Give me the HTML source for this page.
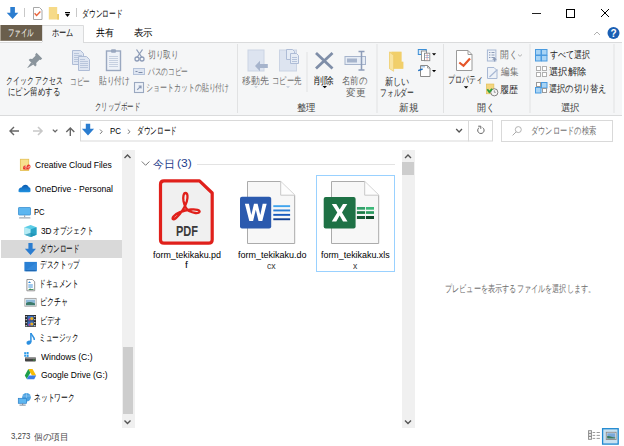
<!DOCTYPE html>
<html><head><meta charset="utf-8">
<style>
html,body{margin:0;padding:0;}
body{width:624px;height:446px;overflow:hidden;position:relative;background:#fff;font-family:'Liberation Sans',sans-serif;}
.a{position:absolute;}
.t{position:absolute;white-space:nowrap;line-height:12px;transform-origin:0 0;font-family:'Liberation Sans',sans-serif;}
svg{position:absolute;overflow:visible;}
</style></head><body>

<!-- ===== title bar ===== -->
<svg style="left:0;top:0" width="624" height="42" viewBox="0 0 624 42">
  <!-- download arrow -->
  <path d="M10.3 7h4.6v5.8h3.4L12.6 19 6.7 12.8h3.6z" fill="#2b7dd0"/>
  <rect x="24" y="8" width="1" height="9" fill="#c8c8c8"/>
  <!-- properties doc -->
  <path d="M33.5 7.5h6l2.5 2.5v9.5h-8.5z" fill="#fff" stroke="#a8a8a8" stroke-width="1"/>
  <path d="M34.6 13.2l2 2.2 3.8-3.8" fill="none" stroke="#e8643c" stroke-width="1.4"/>
  <!-- folder -->
  <path d="M48.8 7h8.4v7h1.8v5.6H48.8z" fill="#f6da88"/>
  <path d="M57.2 14h1.8v5.6h-1.8z" fill="#eccb6a"/>
  <!-- dropdown -->
  <rect x="65" y="12" width="5" height="1" fill="#000"/>
  <path d="M65 13.8h5l-2.5 3.1z" fill="#000"/>
  <rect x="76" y="8" width="1" height="9" fill="#c8c8c8"/>
  <!-- window controls -->
  <rect x="532" y="13" width="9" height="1" fill="#222"/>
  <rect x="566.5" y="9.5" width="8" height="8" fill="none" stroke="#000" stroke-width="1"/>
  <path d="M601 9l8 8M609 9l-8 8" stroke="#000" stroke-width="1"/>
  <!-- file tab -->
  <rect x="0" y="25" width="1" height="16" fill="#a89e8e"/><rect x="1" y="25" width="42" height="15.8" fill="#6a5e4c"/>
  <!-- home tab -->
  <path d="M42.5 42.5V25.5h41v17" fill="#f5f6f7" stroke="#dadbdc" stroke-width="1"/>
  <!-- caret + help -->
  <path d="M594 35l3-3 3 3" fill="none" stroke="#b0b0b0" stroke-width="1"/>
  <circle cx="613.5" cy="33" r="6" fill="#1a5fb4"/>
  <text x="613.5" y="37" font-size="10" font-weight="bold" fill="#fff" text-anchor="middle" font-family="Liberation Sans">?</text>
</svg>

<!-- ===== ribbon ===== -->
<div class="a" style="left:0;top:42px;width:622px;height:73px;background:#f5f6f7;border-top:1px solid #dadbdc;border-bottom:1px solid #dadbdc;box-sizing:border-box;height:74px"></div>
<div class="a" style="left:42px;top:42px;width:41px;height:2px;background:#f5f6f7"></div>
<svg style="left:0;top:0" width="624" height="120" viewBox="0 0 624 120">
  <!-- separators -->
  <rect x="237" y="44" width="1" height="69" fill="#e1e2e3"/>
  <rect x="376.5" y="44" width="1" height="69" fill="#e1e2e3"/>
  <rect x="443" y="44" width="1" height="69" fill="#e1e2e3"/>
  <rect x="529.5" y="44" width="1" height="69" fill="#e1e2e3"/>
  <rect x="613.5" y="44" width="1" height="69" fill="#e1e2e3"/>
  <rect x="306.5" y="52" width="1" height="40" fill="#e1e2e3"/>

  <!-- pin -->
  <g fill="#8a949c">
    <path d="M36.5 52.8l5.7 5.7-1.5 1.5-1.2-.3-3.3 3.3.3 2.2-1.3 1.3-6.5-6.5 1.3-1.3 2.2.3 3.3-3.3-.3-1.2z"/>
    <path d="M31.2 62.2l2.2 2.2-5.8 3.6-.3-.3z"/>
  </g>
  <!-- copy -->
  <g stroke="#aebcd6" stroke-width="1" fill="#dfe6f2">
    <path d="M72.5 50.5h8l3 3v11h-11z"/>
    <path d="M78.5 56.5h8l3 3v11h-11z"/>
  </g>
  <g stroke="#b9c6dc" stroke-width="1">
    <path d="M74 53.5h5M74 55.5h8M74 57.5h4M74 59.5h4M74 61.5h4"/>
    <path d="M80 59.5h5M80 61.5h8M80 63.5h8M80 65.5h8M80 67.5h8"/>
  </g>
  <!-- paste clipboard -->
  <rect x="106.5" y="51" width="14" height="19.5" fill="#eef2f8" stroke="#9aa8c0" stroke-width="1.4"/>
  <rect x="111" y="49.3" width="5" height="3.5" rx="1" fill="#9aa8c0"/>
  <g stroke="#c6d0e0" stroke-width="1"><path d="M109 56.5h9M109 58.5h9M109 60.5h9M109 62.5h9M109 64.5h9M109 66.5h9"/></g>
  <!-- scissors -->
  <g fill="none" stroke="#8d9cb8" stroke-width="1.3">
    <path d="M136.5 49.5l5.5 8M142.5 49.5l-5.5 8"/>
    <circle cx="137" cy="59" r="2"/><circle cx="142" cy="59" r="2"/>
  </g>
  <!-- path copy -->
  <rect x="133.5" y="68.5" width="11" height="6" fill="#dfe6f2" stroke="#b4c2da" stroke-width="1"/>
  <path d="M135.5 71.5h2M138.5 72.5h4" stroke="#7d8ca8" stroke-width="1"/>
  <!-- shortcut paste -->
  <rect x="134.5" y="82.5" width="9" height="10" fill="#eef2f8" stroke="#9aa8c0" stroke-width="1.1"/>
  <path d="M137.2 89.8l3.8-3.8M138.6 86h2.4v2.4" fill="none" stroke="#8d9cb8" stroke-width="1.2"/>

  <!-- move to -->
  <rect x="248" y="50" width="16" height="21" fill="#dde4f0" stroke="#cbd4e4" stroke-width="1"/>
  <path d="M255 66l5-5.3v3.3h7.8v4h-7.8v3.3z" fill="#a6b4cc"/>
  <!-- copy to -->
  <rect x="279.5" y="50" width="17" height="21" fill="#dde4f0" stroke="#cbd4e4" stroke-width="1"/>
  <g stroke="#aebcd6" stroke-width="1" fill="#e6ecf5">
    <path d="M286.5 49.5h6l2 2v8h-8z"/>
    <path d="M290.5 53.5h6l2 2v8h-8z"/>
  </g>
  <path d="M292 57.5h5M292 59.5h5M292 61.5h5" stroke="#b4c2da" stroke-width="1"/>
  <path d="M254 86.5h4l-2 1.3z M286 86.5h4l-2 1.3z" fill="#a6b4cc"/>
  <!-- delete X -->
  <path d="M316 53l16.5 15.5M332.5 53L316 68.5" stroke="#7f8ea8" stroke-width="2.8"/>
  <path d="M322.5 86h4.5l-2.25 2.2z" fill="#000"/>
  <!-- rename -->
  <rect x="345" y="56.5" width="20.5" height="8" fill="#e6ecf5" stroke="#a6b4cc" stroke-width="1"/>
  <rect x="347" y="58.5" width="10" height="4" fill="#a6b4cc"/>
  <path d="M358.5 51.5h6M361.5 51.5v18.5M358.5 70h6" fill="none" stroke="#8d9cb8" stroke-width="1.5"/>

  <!-- new folder -->
  <path d="M389.5 51.8h12v9.9h1.8v7h-13.8z" fill="#f4d67c"/>
  <path d="M393.6 55.5v13.2h9.7v-7h-1.8v-9.9h-10z" fill="#efc95f" opacity="0.6"/>
  <path d="M389.5 52l4.1 3.3v16l-4.1-2.6z" fill="#f9e4a0" stroke="#ecc862" stroke-width="0.6"/>
  <!-- new item -->
  <rect x="418.3" y="49.5" width="8" height="5" fill="#d6e8f8" stroke="#3d8fd6" stroke-width="1"/>
  <rect x="421.5" y="51" width="5" height="9.5" fill="#fff" stroke="#8a8a8a" stroke-width="0.9"/>
  <rect x="424.5" y="53.2" width="5.3" height="7.5" fill="#fff" stroke="#8a8a8a" stroke-width="0.9"/>
  <path d="M425.3 55.5h3.8M425.3 57.5h3.8" stroke="#7aaee0" stroke-width="0.7"/>
  <path d="M427.1 53.8v6.5" stroke="#e07070" stroke-width="0.6"/>
  <path d="M432 53.3h4.1l-2.05 2.3z" fill="#000"/>
  <!-- easy access -->
  <path d="M420.5 65.5h7l2.5 2.5v8.5h-9.5z" fill="#fff" stroke="#8a8a8a" stroke-width="1"/>
  <path d="M427.5 65.5v2.5h2.5" fill="none" stroke="#8a8a8a" stroke-width="0.8"/>
  <path d="M421 66.8h4" stroke="#6aa0d8" stroke-width="0.8"/>
  <path d="M418.2 70.6l4.4-1.6" stroke="#1f6fc0" stroke-width="1.5"/>
  <path d="M432 70h4.1l-2.05 2.3z" fill="#000"/>

  <!-- properties -->
  <path d="M456.5 50.5h11.5l4 4v16h-15.5z" fill="#fff" stroke="#9a9a9a" stroke-width="1"/>
  <path d="M468 50.5v4h4" fill="none" stroke="#9a9a9a" stroke-width="1"/>
  <path d="M459.3 62.5l4.2 3.3 6.5-7.2" fill="none" stroke="#e5562a" stroke-width="2.2"/>
  <path d="M463.8 86.2h4.5l-2.25 2.2z" fill="#000"/>
  <!-- open -->
  <rect x="487.4" y="50" width="8.5" height="11" fill="#eef2f8" stroke="#a8b8d4" stroke-width="1"/>
  <path d="M489 52.5h1.4M489 55h1.4M489 57.5h1.4M491.5 52.5h3M491.5 55h3M491.5 57.5h3" stroke="#8d9cb8" stroke-width="1"/>
  <path d="M494.5 61.5v-3.5M492.8 59.8l1.7-1.9 1.7 1.9" fill="none" stroke="#8d9cb8" stroke-width="1.1"/>
  <path d="M518 54.5l2 1.8 2-1.8" fill="none" stroke="#aaa" stroke-width="0.9"/>
  <!-- edit -->
  <path d="M487.5 67.5h6.5l3 3v8h-9.5z" fill="#eef2f8" stroke="#a8b8d4" stroke-width="1"/>
  <path d="M489.5 77l8-7.5" stroke="#a8b8d4" stroke-width="1.2"/>
  <!-- history -->
  <rect x="486.3" y="84" width="7.6" height="9.8" fill="#f3d57e" stroke="#e0bc50" stroke-width="0.6"/>
  <circle cx="494.3" cy="92.3" r="3.6" fill="#f4f4f4" stroke="#777" stroke-width="0.9"/>
  <path d="M494.3 90.3v2h1.5" fill="none" stroke="#777" stroke-width="0.7"/>
  <path d="M487.3 89.3l2 2.8 2.8-3.3" fill="none" stroke="#2f9e3f" stroke-width="1.8"/>

  <!-- select all -->
  <g fill="#a8d4f5" stroke="#4a9be0" stroke-width="1">
    <rect x="535.5" y="49.5" width="5.5" height="5.5"/><rect x="541.5" y="49.5" width="5.5" height="5.5"/>
    <rect x="535.5" y="55.5" width="5.5" height="5.5"/><rect x="541.5" y="55.5" width="5.5" height="5.5"/>
  </g>
  <!-- select none -->
  <g fill="#fff" stroke="#b0b0b0" stroke-width="1">
    <rect x="536.5" y="66.5" width="4" height="4"/><rect x="542.5" y="66.5" width="4" height="4"/>
    <rect x="536.5" y="72.5" width="4" height="4"/><rect x="542.5" y="72.5" width="4" height="4"/>
  </g>
  <!-- invert -->
  <g stroke-width="1">
    <rect x="536.5" y="82.5" width="4" height="4" fill="#fff" stroke="#9a9a9a"/>
    <rect x="541.5" y="82.5" width="5.5" height="5.5" fill="#a8d4f5" stroke="#4a9be0"/>
    <rect x="535.5" y="87.5" width="5.5" height="5.5" fill="#a8d4f5" stroke="#4a9be0"/>
    <rect x="542.5" y="88.5" width="4" height="4" fill="#fff" stroke="#9a9a9a"/>
  </g>
</svg>

<!-- ===== address bar ===== -->
<svg style="left:0;top:115px" width="624" height="32" viewBox="0 115 624 32">
  <path d="M10 131h9M14 127l-4 4 4 4" fill="none" stroke="#666" stroke-width="1.4"/>
  <path d="M33 131h9M38 127l4 4-4 4" fill="none" stroke="#c8c8c8" stroke-width="1.6"/>
  <path d="M52.8 129.6l2.3 2.2 2.3-2.2" fill="none" stroke="#666" stroke-width="1.2"/>
  <path d="M70.3 136V128M66.3 132l4-4 4 4" fill="none" stroke="#666" stroke-width="1.4"/>
  <rect x="80.5" y="120.5" width="388" height="20.5" fill="#fff" stroke="#d9d9d9" stroke-width="1"/>
  <rect x="468.5" y="120.5" width="24" height="20.5" fill="#fff" stroke="#d9d9d9" stroke-width="1"/>
  <path d="M83 124h0" stroke="none"/>
  <path d="M85.8 123.8h4.4v5h3.9L88 135.6 81.9 128.8h3.9z" fill="#2b7dd0"/>
  <path d="M100 129.5l2.2 2.2-2.2 2.2M127.8 129.5l2.2 2.2-2.2 2.2" fill="none" stroke="#777" stroke-width="1"/>
  <path d="M456.2 129l2.9 3 2.9-3" fill="none" stroke="#555" stroke-width="1.3"/>
  <path d="M479.2 127.6a3.2 3.2 0 1 0 3.4 0" fill="none" stroke="#666" stroke-width="1"/><path d="M478.2 126.2h2.6v2.6" fill="none" stroke="#666" stroke-width="1"/>
  <rect x="501.5" y="120.5" width="111" height="21" fill="#fff" stroke="#d9d9d9" stroke-width="1"/>
  <circle cx="518.3" cy="129.6" r="3" fill="none" stroke="#aaa" stroke-width="0.9"/>
  <path d="M516.2 131.8l-3.6 3.6" stroke="#aaa" stroke-width="1"/>
</svg>

<!-- ===== nav pane ===== -->
<div class="a" style="left:1px;top:240px;width:120.5px;height:17.6px;background:#d9d9d9"></div>
<div class="a" style="left:122px;top:150px;width:12.5px;height:278px;background:#f0f0f0"></div>
<div class="a" style="left:122.5px;top:347px;width:10.5px;height:67px;background:#cdcdcd"></div>
<svg style="left:0;top:146px" width="140" height="282" viewBox="0 146 140 282">
  <path d="M124.5 158l3-3 3 3" fill="none" stroke="#555" stroke-width="1.4"/>
  <path d="M124.5 420.5l3 3 3-3" fill="none" stroke="#555" stroke-width="1.4"/>
  <!-- CC folder -->
  <rect x="20.4" y="159.3" width="8.3" height="11.2" fill="#f7df8e" stroke="#e6c25a" stroke-width="0.9"/>
  <path d="M23.2 167.3a1.9 1.9 0 1 1 3.8 0a1.9 1.9 0 1 1 3.4 0a2.3 2.3 0 0 1-2.3 2.3h-4.6a2.3 2.3 0 0 1-.3-2.3z" fill="#e8332a"/>
  <path d="M25 167.2a1 1 0 1 1 0 .1M28.5 167.2a1 1 0 1 1 0 .1" fill="none" stroke="#fbd0c0" stroke-width="0.7"/>
  <!-- OneDrive cloud -->
  <defs><linearGradient id="od" x1="0" y1="0" x2="0" y2="1"><stop offset="0" stop-color="#0a5ab0"/><stop offset="1" stop-color="#2191e0"/></linearGradient></defs>
  <path d="M18.5 191C18.5 189 19.5 187.8 21.5 187.6C22.3 185.7 23.8 184.7 25.5 184.7C27.2 184.7 28.3 185.7 28.8 187.3C29.8 187.3 30.5 188.2 30.5 189.5V191C30.5 191.8 30 192.2 29.3 192.2H19.7C19 192.2 18.5 191.8 18.5 191Z" fill="url(#od)"/>
  <!-- PC monitor -->
  <rect x="18.5" y="207.5" width="12" height="7.5" rx="0.6" fill="#5db6f0" stroke="#3a8fd0" stroke-width="0.8"/>
  <rect x="24" y="215.2" width="1.2" height="2" fill="#a0aab5"/>
  <rect x="19" y="217.2" width="11.5" height="1.4" rx="0.6" fill="#a0aab5"/>
  <!-- 3D cube -->
  <path d="M24.5 227.2l6.2-2.2 5.8 2.2v7.6l-5.8 2.2-6.2-2.2z" fill="#5ccde6"/>
  <path d="M24.5 227.2l6.2 2.1v7.7l-6.2-2.2z" fill="#b5ecf5"/>
  <path d="M30.7 229.3l5.8-2.1v7.6l-5.8 2.2z" fill="#2aa3c6"/>
  <path d="M24.5 234.8l6.2-2 5.8 2-5.8 2.2z" fill="#1f8eb0" opacity="0.7"/>
  <!-- download arrow -->
  <path d="M28.4 242.9h4.2v5.8h3.4l-5.5 6.2-5.6-6.2h3.5z" fill="#2b7dd0"/>
  <!-- desktop -->
  <rect x="24.4" y="261.9" width="12.5" height="9.3" fill="#2a80d4"/>
  <path d="M24.4 271.2l12.5-9.3v9.3z" fill="#3d8fe0" opacity="0.5"/>
  <rect x="25.5" y="270.2" width="10.3" height="1" fill="#1a5fa8"/>
  <!-- documents -->
  <path d="M26.9 279.5h5.5l2.3 2.3v9h-7.8z" fill="#fff" stroke="#888" stroke-width="0.9"/>
  <path d="M29.5 281.2l1.5 1.8h-3z" fill="#2b88d8"/>
  <path d="M28.3 285h4.5M28.3 287h4.5" stroke="#2b88d8" stroke-width="0.9"/>
  <path d="M28 290l2-1.5 2 .8 1.5-.5v1.2z" fill="#3d8a5a"/>
  <!-- pictures -->
  <rect x="24.9" y="298.4" width="11.2" height="7.8" fill="#fff" stroke="#a0a0a0" stroke-width="0.9"/>
  <rect x="26" y="299.6" width="9" height="5.6" fill="#8cb8d8"/>
  <path d="M26 303.2c2-1.5 4-1.5 9 .2v1.8h-9z" fill="#3c7a6a"/>
  <!-- videos -->
  <rect x="25" y="315" width="11" height="11.8" fill="#2a2a2a"/>
  <g fill="#ddd"><rect x="25.6" y="316" width="1.2" height="1.2"/><rect x="25.6" y="319" width="1.2" height="1.2"/><rect x="25.6" y="322" width="1.2" height="1.2"/><rect x="25.6" y="325" width="1.2" height="1.2"/><rect x="34.2" y="316" width="1.2" height="1.2"/><rect x="34.2" y="319" width="1.2" height="1.2"/><rect x="34.2" y="322" width="1.2" height="1.2"/><rect x="34.2" y="325" width="1.2" height="1.2"/></g>
  <rect x="27.5" y="315.8" width="6.2" height="4.8" fill="#3a6ec0"/>
  <rect x="27.5" y="321.2" width="6.2" height="4.8" fill="#3a6ec0"/>
  <circle cx="31.8" cy="318.6" r="1.6" fill="#e8b020"/><circle cx="31.8" cy="324" r="1.6" fill="#e8b020"/>
  <circle cx="29.5" cy="319.5" r="1" fill="#d03a80"/><circle cx="29.5" cy="324.8" r="1" fill="#d03a80"/>
  <!-- music -->
  <path d="M30.9 333v9.2" stroke="#2b8fe0" stroke-width="1.5"/>
  <ellipse cx="28.9" cy="342.6" rx="2.5" ry="2" transform="rotate(-20 28.9 342.6)" fill="#2b8fe0"/>
  <path d="M31 333.2c.6 2.6 3.4 3.3 3.3 6.8" fill="none" stroke="#2b8fe0" stroke-width="1.4"/>
  <!-- windows drive -->
  <g fill="#2b9ae8"><rect x="24.2" y="352.2" width="1.9" height="2"/><rect x="26.6" y="352" width="2" height="2.2"/><rect x="24.2" y="354.7" width="1.9" height="2"/><rect x="26.6" y="354.7" width="2" height="2.2"/></g>
  <rect x="25" y="357.3" width="10.8" height="4.2" rx="0.8" fill="#444"/>
  <rect x="25.3" y="357.3" width="10.2" height="1.3" fill="#aaa"/>
  <rect x="33.3" y="359.6" width="1.3" height="0.9" fill="#4c4"/>
  <!-- google drive -->
  <path d="M28.3 369h4.2l3.7 6.5h-4.2z" fill="#f8bc05"/>
  <path d="M28.3 369l2.1 3.7-3.6 6.3-2-3.5z" fill="#1e9f4a"/>
  <path d="M26.8 379.2l2-3.6h7.4l-2 3.6z" fill="#3a7de8"/>
  <!-- network -->
  <circle cx="26.5" cy="397.3" r="4.3" fill="#4da2e0"/>
  <path d="M23 396h7M26.5 393v8.5" stroke="#9fd0f5" stroke-width="0.6"/>
  <rect x="18.3" y="398.3" width="8.3" height="5" fill="#5db6f0" stroke="#2a7fc8" stroke-width="0.7"/>
  <rect x="22" y="403.5" width="1.2" height="1.3" fill="#7a8a9a"/>
  <rect x="19.5" y="404.6" width="6.2" height="1" fill="#7a8a9a"/>
</svg>

<!-- ===== content ===== -->
<div class="a" style="left:197px;top:164px;width:198px;height:1px;background:#e3e3e3"></div>
<div class="a" style="left:401.5px;top:150px;width:13.5px;height:278px;background:#f0f0f0"></div>
<div class="a" style="left:402px;top:162px;width:11.5px;height:13px;background:#cdcdcd"></div>
<div class="a" style="left:316px;top:175px;width:79px;height:97px;border:1px solid #99d1ff;box-sizing:border-box"></div>
<svg style="left:0;top:146px" width="624" height="282" viewBox="0 146 624 282">
  <path d="M405 158l3-3 3 3" fill="none" stroke="#555" stroke-width="1.4"/>
  <path d="M405 420.5l3 3 3-3" fill="none" stroke="#555" stroke-width="1.4"/>
  <path d="M141.8 161.5l3.8 3.8 3.8-3.8" fill="none" stroke="#777" stroke-width="1"/>
  <!-- PDF -->
  <path d="M164 180.8h35.5l12.7 12.2v46.7q0 3.5-3.5 3.5h-44.7q-3.5 0-3.5-3.5v-55.4q0-3.5 3.5-3.5z" fill="#f0f0f0" stroke="#e0201b" stroke-width="3.2" stroke-linejoin="round"/>
  <path d="M185.5 193C187.8 193 188 197 186.8 201.5C185.5 206 181 214 176 218C173 220.5 171.5 219 173.5 216.5C176 213.5 183 210.5 191 209.5C196 209 200.5 210 199.5 212C198.5 214 193 213 189 211C186.5 209.5 184.5 206 183.5 201C182.8 197 183.5 193 185.5 193Z" fill="none" stroke="#e0201b" stroke-width="2.3" stroke-linejoin="round"/>
  <text x="176" y="235.6" font-family="Liberation Sans" font-weight="bold" font-size="13.8" fill="#3a3a3a" textLength="22" lengthAdjust="spacingAndGlyphs">PDF</text>
  <!-- Word -->
  <path d="M247.5 181.5h33.2l14 13.7v48.3h-47.2z" fill="#f7f7f7" stroke="#ababab" stroke-width="1"/>
  <path d="M280.7 181.5v13.7h14" fill="#fdfdfd" stroke="#c8c8c8" stroke-width="1"/>
  <rect x="240" y="196.8" width="31.2" height="31.6" rx="2" fill="#2b5aae"/>
  <path d="M244.9 203.7h4l2.4 11.3 2.7-11.3h3.6l2.7 11.3 2.4-11.3h4l-4.4 17.3h-3.8l-2.7-11.2-2.7 11.2h-3.8z" fill="#fff"/>
  <rect x="273.3" y="205.2" width="16.8" height="1.9" fill="#41a5ee"/>
  <rect x="273.3" y="209.5" width="16.8" height="1.9" fill="#2b7cd3"/>
  <rect x="273.3" y="213.9" width="16.8" height="1.9" fill="#185abd"/>
  <rect x="273.3" y="218.3" width="16.8" height="1.9" fill="#103f91"/>
  <!-- Excel -->
  <path d="M331.5 181.5h33.2l14 13.7v48.3h-47.2z" fill="#f7f7f7" stroke="#ababab" stroke-width="1"/>
  <path d="M364.7 181.5v13.7h14" fill="#fdfdfd" stroke="#c8c8c8" stroke-width="1"/>
  <rect x="323.7" y="196.9" width="31.9" height="31.7" rx="2" fill="#1e7145"/>
  <path d="M331.8 203.9h4.5l3.35 5.7 3.35-5.7h4.3l-5.3 8.6 5.5 8.9h-4.5l-3.35-5.9-3.35 5.9h-4.5l5.5-8.9z" fill="#fff"/>
  <rect x="356.9" y="207" width="8.1" height="2.7" fill="#33a06a"/>
  <rect x="365.9" y="207" width="8.1" height="2.7" fill="#3cb878"/>
  <rect x="356.9" y="211.2" width="8.1" height="2.7" fill="#1a7a45"/>
  <rect x="365.9" y="211.2" width="8.1" height="2.7" fill="#2a9a5f"/>
  <rect x="356.9" y="216" width="8.1" height="3" fill="#185c37"/>
  <rect x="365.9" y="216" width="8.1" height="3" fill="#0f4a2a"/>
</svg>

<!-- ===== status bar ===== -->
<svg style="left:0;top:425px" width="624" height="21" viewBox="0 425 624 21">
  <g fill="#fff" stroke="#8a8a8a" stroke-width="1">
    <rect x="588.6" y="430.7" width="2.8" height="2.6"/>
    <rect x="588.6" y="433.6" width="2.8" height="2.6"/>
    <rect x="588.6" y="436.5" width="2.8" height="2.8"/>
  </g>
  <path d="M592.6 432.5h2.6M596.6 432.5h3.3M592.6 435.4h2.6M596.6 435.4h3.3M592.6 438.4h2.6M596.6 438.4h3.3" stroke="#9a9a9a" stroke-width="1"/>
  <rect x="602.6" y="428.7" width="15.6" height="15.4" fill="#c8e1f0" stroke="#1e88d0" stroke-width="1.3"/>
  <rect x="606.3" y="432.3" width="9.8" height="7.2" fill="#fff" stroke="#8a8a8a" stroke-width="0.9"/>
  <rect x="607.2" y="433.2" width="8" height="5.4" fill="#7aa8d8"/>
  <path d="M607.2 436c2.5-.5 4.5 1 8 1.6v1h-8z" fill="#3d7a5a"/>
</svg>

<div class="t" style="left:81.72px;top:5.80px;color:#000;transform:scaleX(0.6776)"><span style="font-size:10px">ダウンロード</span></div>
<div class="t" style="left:8.15px;top:24.70px;color:#fff;transform:scaleX(0.6462)"><span style="font-size:10px">ファイル</span></div>
<div class="t" style="left:52.28px;top:25.00px;color:#000;transform:scaleX(0.7214)"><span style="font-size:10px">ホーム</span></div>
<div class="t" style="left:96.00px;top:25.00px;color:#000;transform:scaleX(0.8947)"><span style="font-size:10px">共有</span></div>
<div class="t" style="left:134.05px;top:25.00px;color:#000;transform:scaleX(0.9474)"><span style="font-size:10px">表示</span></div>
<div class="t" style="left:6.01px;top:73.00px;color:#222;transform:scaleX(0.6864)"><span style="font-size:10px">クイック</span><span style="font-size:9.5px"> </span><span style="font-size:10px">アクセス</span></div>
<div class="t" style="left:8.26px;top:84.40px;color:#222;transform:scaleX(0.7426)"><span style="font-size:10px">にピン留めする</span></div>
<div class="t" style="left:69.67px;top:74.00px;color:#707070;transform:scaleX(0.6667)"><span style="font-size:10px">コピー</span></div>
<div class="t" style="left:98.50px;top:73.40px;color:#707070;transform:scaleX(0.7744)"><span style="font-size:10px">貼り付け</span></div>
<div class="t" style="left:148.20px;top:47.40px;color:#707070;transform:scaleX(0.7711)"><span style="font-size:10px">切り取り</span></div>
<div class="t" style="left:147.70px;top:63.90px;color:#707070;transform:scaleX(0.6695)"><span style="font-size:10px">パスのコピー</span></div>
<div class="t" style="left:146.31px;top:79.90px;color:#707070;transform:scaleX(0.6949)"><span style="font-size:10px">ショートカットの貼り付け</span></div>
<div class="t" style="left:95.35px;top:99.00px;color:#3c3c3c;transform:scaleX(0.6471)"><span style="font-size:10px">クリップボード</span></div>
<div class="t" style="left:242.00px;top:73.40px;color:#707070;transform:scaleX(0.8900)"><span style="font-size:10px">移動先</span></div>
<div class="t" style="left:271.83px;top:73.00px;color:#707070;transform:scaleX(0.7342)"><span style="font-size:10px">コピー先</span></div>
<div class="t" style="left:314.00px;top:73.00px;color:#222;transform:scaleX(0.9789)"><span style="font-size:10px">削除</span></div>
<div class="t" style="left:342.16px;top:73.00px;color:#666;transform:scaleX(0.8448)"><span style="font-size:10px">名前の</span></div>
<div class="t" style="left:345.53px;top:85.00px;color:#666;transform:scaleX(0.9722)"><span style="font-size:10px">変更</span></div>
<div class="t" style="left:296.77px;top:100.00px;color:#3c3c3c;transform:scaleX(0.9333)"><span style="font-size:10px">整理</span></div>
<div class="t" style="left:384.78px;top:74.00px;color:#222;transform:scaleX(0.8179)"><span style="font-size:10px">新しい</span></div>
<div class="t" style="left:380.12px;top:84.70px;color:#222;transform:scaleX(0.6771)"><span style="font-size:10px">フォルダー</span></div>
<div class="t" style="left:399.03px;top:100.00px;color:#3c3c3c;transform:scaleX(0.9667)"><span style="font-size:10px">新規</span></div>
<div class="t" style="left:447.50px;top:72.40px;color:#222;transform:scaleX(0.6957)"><span style="font-size:10px">プロパティ</span></div>
<div class="t" style="left:499.92px;top:47.00px;color:#707070;transform:scaleX(0.8812)"><span style="font-size:10px">開く</span></div>
<div class="t" style="left:500.80px;top:64.00px;color:#707070;transform:scaleX(0.8526)"><span style="font-size:10px">編集</span></div>
<div class="t" style="left:499.90px;top:81.50px;color:#333;transform:scaleX(0.9000)"><span style="font-size:10px">履歴</span></div>
<div class="t" style="left:477.30px;top:100.00px;color:#3c3c3c;transform:scaleX(0.9000)"><span style="font-size:10px">開く</span></div>
<div class="t" style="left:549.90px;top:47.10px;color:#222;transform:scaleX(0.8020)"><span style="font-size:10px">すべて選択</span></div>
<div class="t" style="left:549.07px;top:64.20px;color:#222;transform:scaleX(0.9342)"><span style="font-size:10px">選択解除</span></div>
<div class="t" style="left:549.18px;top:80.50px;color:#222;transform:scaleX(0.8235)"><span style="font-size:10px">選択の切り替え</span></div>
<div class="t" style="left:561.06px;top:100.00px;color:#3c3c3c;transform:scaleX(0.9444)"><span style="font-size:10px">選択</span></div>
<div class="t" style="left:109.97px;top:122.50px;color:#000;transform:scaleX(0.8333)"><span style="font-size:9.5px">PC</span></div>
<div class="t" style="left:137.03px;top:123.00px;color:#000;transform:scaleX(0.6690)"><span style="font-size:10px">ダウンロード</span></div>
<div class="t" style="left:531.28px;top:123.00px;color:#6d6d6d;transform:scaleX(0.7225)"><span style="font-size:10px">ダウンロードの検索</span></div>
<div class="t" style="left:34.80px;top:157.10px;color:#000;transform:scaleX(0.8976)"><span style="font-size:9.5px">Creative Cloud Files</span></div>
<div class="t" style="left:34.50px;top:181.20px;color:#000;transform:scaleX(0.9058)"><span style="font-size:9.5px">OneDrive - Personal</span></div>
<div class="t" style="left:34.29px;top:203.70px;color:#000;transform:scaleX(0.8083)"><span style="font-size:9.5px">PC</span></div>
<div class="t" style="left:40.50px;top:222.60px;color:#000;transform:scaleX(0.9182)"><span style="font-size:9px">3D</span></div>
<div class="t" style="left:52.93px;top:223.20px;color:#000;transform:scaleX(0.6719)"><span style="font-size:10px">オブジェクト</span></div>
<div class="t" style="left:40.44px;top:240.70px;color:#000;transform:scaleX(0.6552)"><span style="font-size:10px">ダウンロード</span></div>
<div class="t" style="left:39.67px;top:257.00px;color:#000;transform:scaleX(0.6632)"><span style="font-size:10px">デスクトップ</span></div>
<div class="t" style="left:39.01px;top:275.80px;color:#000;transform:scaleX(0.6618)"><span style="font-size:10px">ドキュメント</span></div>
<div class="t" style="left:39.59px;top:294.40px;color:#000;transform:scaleX(0.7028)"><span style="font-size:10px">ピクチャ</span></div>
<div class="t" style="left:39.57px;top:312.60px;color:#000;transform:scaleX(0.7148)"><span style="font-size:10px">ビデオ</span></div>
<div class="t" style="left:39.01px;top:329.80px;color:#000;transform:scaleX(0.6618)"><span style="font-size:10px">ミュージック</span></div>
<div class="t" style="left:40.70px;top:349.30px;color:#000;transform:scaleX(0.9035)"><span style="font-size:9.5px">Windows (C:)</span></div>
<div class="t" style="left:40.70px;top:367.30px;color:#000;transform:scaleX(0.8959)"><span style="font-size:9.5px">Google Drive (G:)</span></div>
<div class="t" style="left:33.82px;top:390.40px;color:#000;transform:scaleX(0.6754)"><span style="font-size:10px">ネットワーク</span></div>
<div class="t" style="left:153.00px;top:157.00px;color:#1e3c8c;transform:scaleX(1.0000)"><span style="font-size:11px">今日</span></div>
<div class="t" style="left:177.45px;top:156.00px;color:#1e3c8c;transform:scaleX(1.1455)"><span style="font-size:10.5px">(3)</span></div>
<div class="t" style="left:152.80px;top:246.80px;color:#000;transform:scaleX(0.9403)"><span style="font-size:9.5px">form_tekikaku.pd</span></div>
<div class="t" style="left:185.30px;top:257.20px;color:#000;transform:scaleX(1.0667)"><span style="font-size:9.5px">f</span></div>
<div class="t" style="left:237.80px;top:246.80px;color:#000;transform:scaleX(0.9486)"><span style="font-size:9.5px">form_tekikaku.do</span></div>
<div class="t" style="left:266.60px;top:258.00px;color:#333;transform:scaleX(0.9667)"><span style="font-size:9px">cx</span></div>
<div class="t" style="left:321.40px;top:246.80px;color:#000;transform:scaleX(0.9356)"><span style="font-size:9.5px">form_tekikaku.xls</span></div>
<div class="t" style="left:353.20px;top:258.00px;color:#333;transform:scaleX(0.9500)"><span style="font-size:9px">x</span></div>
<div class="t" style="left:445.08px;top:281.40px;color:#6d6d6d;transform:scaleX(0.7153)"><span style="font-size:10px">プレビューを表示するファイルを選択します。</span></div>
<div class="t" style="left:11.20px;top:427.60px;color:#444;transform:scaleX(0.8167)"><span style="font-size:9.5px">3,273</span></div>
<div class="t" style="left:34.40px;top:428.60px;color:#444;transform:scaleX(0.9559)"><span style="font-size:8.5px">個の項目</span></div>
</body></html>
